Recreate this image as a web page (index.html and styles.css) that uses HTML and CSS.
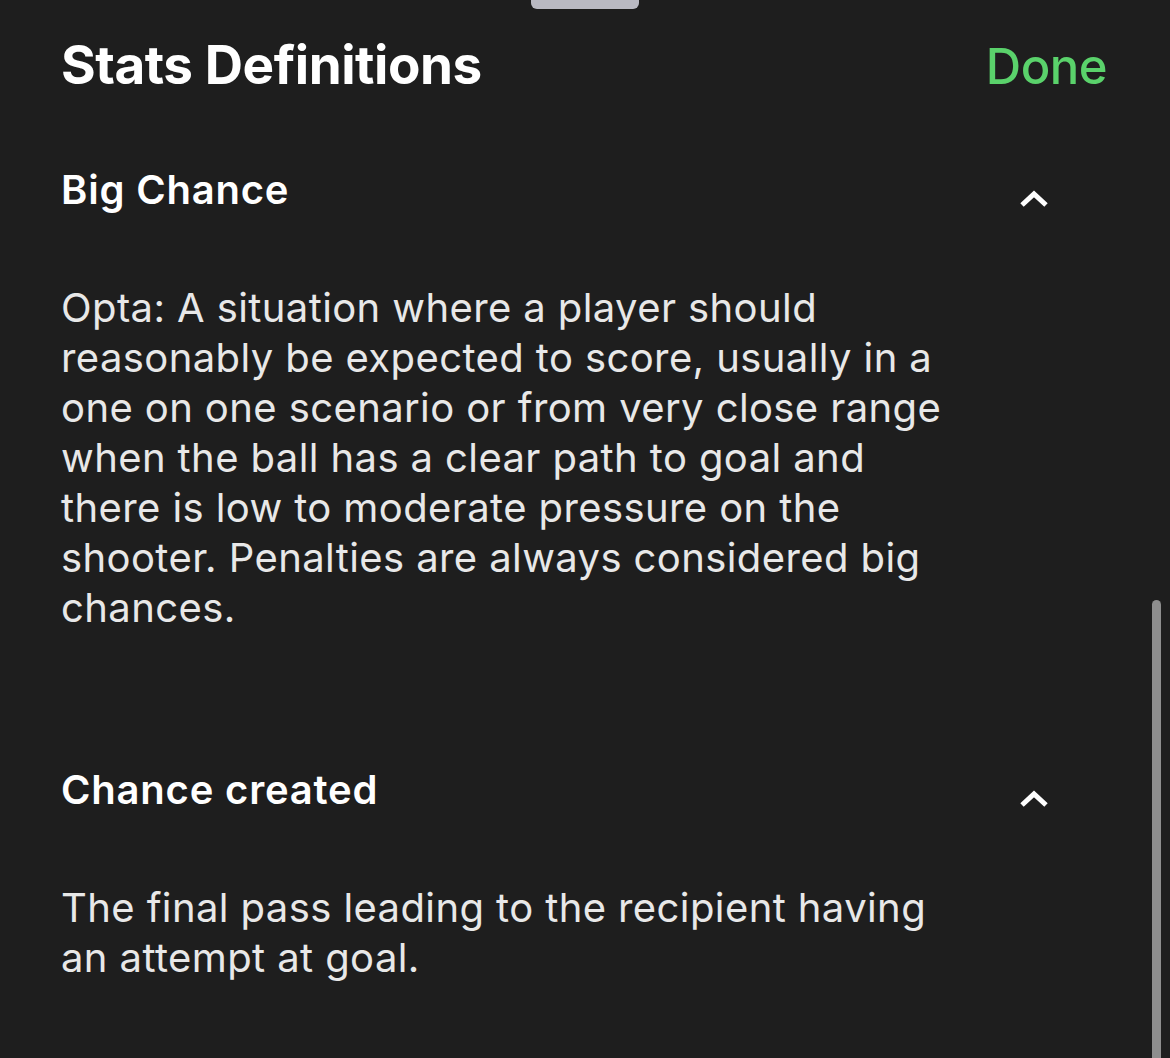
FILE: index.html
```html
<!DOCTYPE html>
<html lang="en">
<head>
<meta charset="utf-8">
<title>Stats Definitions</title>
<link rel="stylesheet" href="styles.css">
</head>
<body>
<div class="grabber-row"><div class="grabber"></div></div>
<div class="scrollbar"></div>
<main class="sheet">
  <header class="topbar">
    <h1 class="title">Stats Definitions</h1>
    <button class="done">Done</button>
  </header>

  <section class="section">
    <div class="section-head">
      <h2 class="section-title">Big Chance</h2>
      <svg class="chevron" viewBox="0 0 30 18" width="30" height="18" aria-hidden="true">
        <path d="M3 15 L15 4 L27 15" fill="none" stroke="#ffffff" stroke-width="5" stroke-linecap="butt" stroke-linejoin="miter"/>
      </svg>
    </div>
    <p class="section-body">Opta: A situation where a player should reasonably be expected to score, usually in a one on one scenario or from very close range when the ball has a clear path to goal and there is low to moderate pressure on the shooter. Penalties are always considered big chances.</p>
  </section>

  <section class="section">
    <div class="section-head">
      <h2 class="section-title">Chance created</h2>
      <svg class="chevron" viewBox="0 0 30 18" width="30" height="18" aria-hidden="true">
        <path d="M3 15 L15 4 L27 15" fill="none" stroke="#ffffff" stroke-width="5" stroke-linecap="butt" stroke-linejoin="miter"/>
      </svg>
    </div>
    <p class="section-body">The final pass leading to the recipient having an attempt at goal.</p>
  </section>
</main>
</body>
</html>
```

FILE: styles.css
```css
html, body {
  margin: 0;
  padding: 0;
  background: #1e1e1e;
  height: 100%;
  overflow: hidden;
}

body {
  font-family: Inter, "Noto Sans", "Liberation Sans", sans-serif;
  color: #ffffff;
  position: relative;
}

.grabber-row {
  display: flex;
  justify-content: center;
  height: 9px;
}

.grabber {
  width: 108px;
  height: 9px;
  margin-left: -1px;
  background: #b9b9c2;
  border-radius: 0 0 6px 6px;
}

.scrollbar {
  position: absolute;
  left: 1152px;
  top: 600px;
  width: 9px;
  height: 480px;
  background: #8e8e8e;
  border-radius: 5px 5px 0 0;
}

.sheet {
  padding: 24px 63px 0 61px;
}

.topbar {
  display: flex;
  justify-content: space-between;
  align-items: baseline;
  height: 64px;
}

.title {
  margin: 0;
  font-size: 53px;
  line-height: 64px;
  font-weight: 700;
  letter-spacing: -0.45px;
}

.done {
  background: none;
  border: 0;
  padding: 0;
  margin: 0;
  font-family: inherit;
  font-size: 49px;
  line-height: 64px;
  font-weight: 500;
  color: #5ad26b;
  letter-spacing: -0.5px;
}

.section {
  padding: 68px 0 64px;
}

.section-head {
  display: flex;
  justify-content: space-between;
  align-items: flex-start;
}

.section-title {
  margin: 0;
  font-size: 40px;
  line-height: 50px;
  font-weight: 600;
  letter-spacing: 0.8px;
}

.chevron {
  margin: 25px 58px 0 0;
  flex: none;
}

.section-body {
  margin: 68px 0 0;
  max-width: 885px;
  font-size: 40px;
  line-height: 50px;
  font-weight: 400;
  color: #e8e8e8;
  letter-spacing: 0.4px;
}
```
